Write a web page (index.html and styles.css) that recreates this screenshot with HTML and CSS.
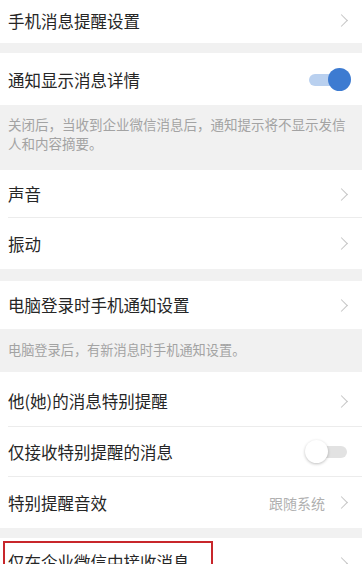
FILE: index.html
```html
<!DOCTYPE html>
<html lang="zh">
<head>
<meta charset="utf-8">
<link rel="stylesheet" href="styles.css">
</head>
<body>
<div class="page">
  <div class="group">
    <div class="row h43"><span class="label">手机消息提醒设置</span><span class="chev"></span></div>
  </div>
  <div class="group gap10">
    <div class="row h52"><span class="label">通知显示消息详情</span><span class="toggle on"><span class="knob"></span></span></div>
  </div>
  <div class="note note1">关闭后，当收到企业微信消息后，通知提示将不显示发信人和内容摘要。</div>
  <div class="group">
    <div class="row h48 sep"><span class="label">声音</span><span class="chev"></span></div>
    <div class="row h51"><span class="label">振动</span><span class="chev"></span></div>
  </div>
  <div class="group gap12">
    <div class="row h48"><span class="label">电脑登录时手机通知设置</span><span class="chev"></span></div>
  </div>
  <div class="note note2">电脑登录后，有新消息时手机通知设置。</div>
  <div class="group">
    <div class="row h55 sep"><span class="label">他(她)的消息特别提醒</span><span class="chev"></span></div>
    <div class="row h50 sep"><span class="label">仅接收特别提醒的消息</span><span class="toggle off"><span class="knob"></span></span></div>
    <div class="row h51"><span class="label">特别提醒音效</span><span class="value">跟随系统</span><span class="chev"></span></div>
  </div>
  <div class="group gap10">
    <div class="row h50 last"><span class="label boxed">仅在企业微信中接收消息</span><span class="chev"></span></div>
  </div>
</div>
</body>
</html>
```
FILE: styles.css
```css
html, body {
  margin: 0;
  padding: 0;
  background: #f1f1f1;
}
.page {
  width: 362px;
  height: 564px;
  overflow: hidden;
  font-family: "Noto Sans CJK SC", "Noto Sans", sans-serif;
  color: #262626;
}
.group {
  background: #fff;
}
.gap10 { margin-top: 10px; }
.gap12 { margin-top: 12px; }
.row {
  display: flex;
  align-items: center;
  padding: 0 14px 0 8px;
  box-sizing: border-box;
  position: relative;
}
.row.sep::after {
  content: "";
  position: absolute;
  left: 8px;
  right: 0;
  bottom: 0;
  height: 1px;
  background: #ececec;
}
.h43 { height: 43px; padding-bottom: 2px; }
.h48 { height: 48px; }
.h50 { height: 50px; }
.h51 { height: 51px; }
.h52 { height: 52px; padding-top: 2px; }
.h55 { height: 55px; padding-top: 3px; }
.last { align-items: flex-start; padding-top: 3px; }
.label {
  flex: 1;
  font-size: 16.5px;
  line-height: 22px;
  white-space: nowrap;
}
.label.boxed {
  flex: 0 0 auto;
  margin-left: -5px;
  padding: 7px 21px 0 3px;
  border: 2px solid #c8262b;
  line-height: 24px;
}
.last .chev { margin-left: auto; margin-top: 18px; }
.value {
  font-size: 14px;
  color: #b0b0b0;
  margin-right: 12px;
}
.chev {
  width: 8px;
  height: 8px;
  border-top: 1.3px solid #c4c4c4;
  border-right: 1.3px solid #c4c4c4;
  transform: rotate(45deg);
  margin-right: 2px;
}
.note {
  color: #a3a3a3;
  font-size: 13.5px;
  line-height: 19px;
  padding: 0 12px 0 8px;
}
.note1 { padding-top: 10px; padding-bottom: 17px; }
.note2 { font-size: 13.2px; padding-top: 11px; padding-bottom: 13px; }
.toggle {
  position: relative;
  width: 40px;
  height: 12px;
  border-radius: 6px;
  margin-right: 0;
}
.toggle.on { background: #b9d0ef; margin-right: -1px; }
.toggle.off { background: #e2e2e2; margin-right: 1px; }
.knob {
  position: absolute;
  top: -6px;
  width: 23px;
  height: 23px;
  border-radius: 50%;
}
.on .knob { right: -2px; background: #3d7bd1; }
.off .knob { left: -2px; background: #fff; box-shadow: 0 1px 3px rgba(0,0,0,0.25); }
```
